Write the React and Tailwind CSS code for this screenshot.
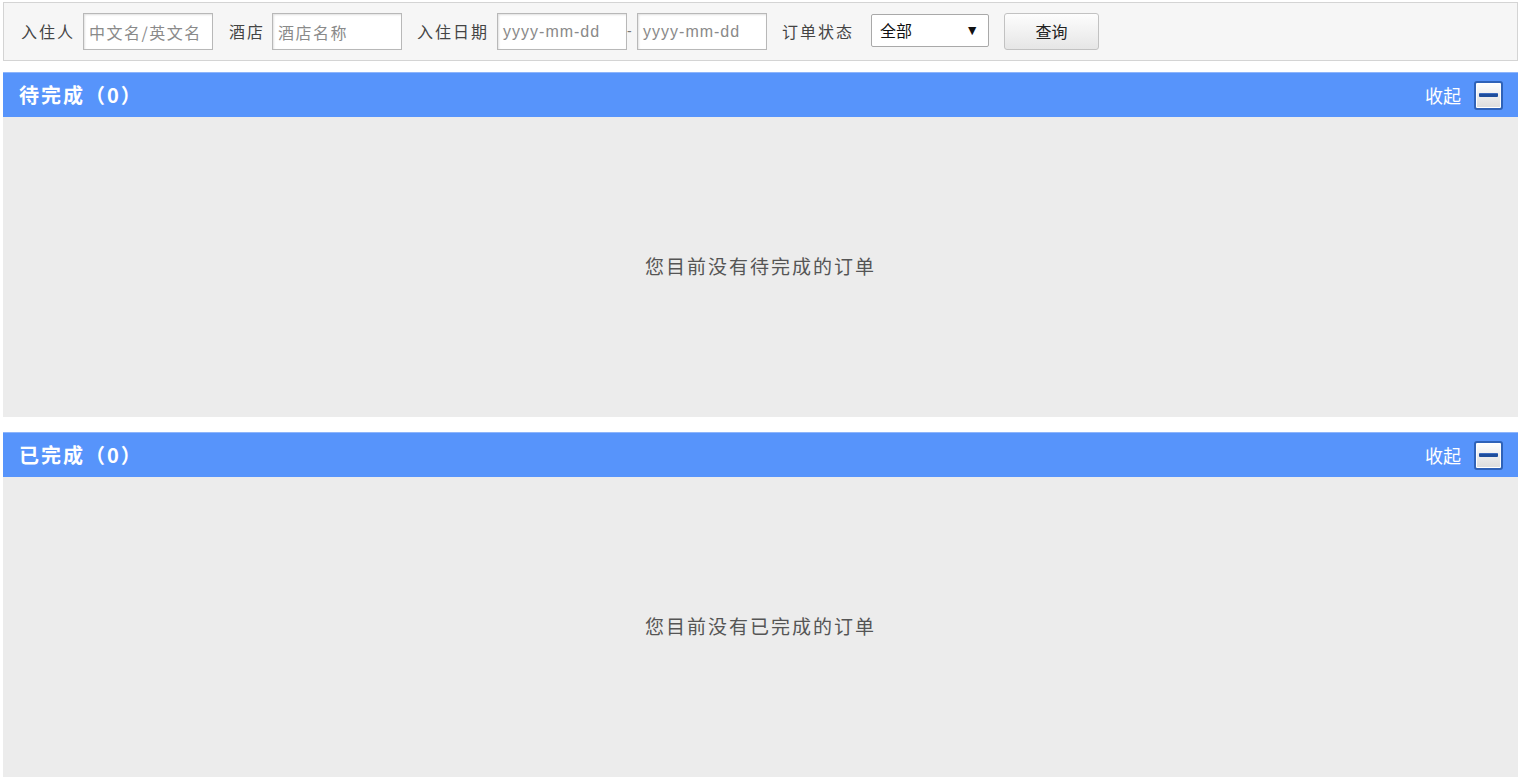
import React from "react";

const cjk = { fontFamily: '"Noto Sans CJK SC", "Liberation Sans", sans-serif' };
const latin = { fontFamily: '"Liberation Sans", "Noto Sans CJK SC", sans-serif' };

function Field({ placeholder, latinText }) {
  return (
    <div
      className={`w-[130px] h-[37px] bg-white border border-[#b8b8b8] shadow-[inset_1px_1px_2px_rgba(0,0,0,0.12)] flex items-center pl-[5px] text-[16px] text-[#8a8a8a] ${latinText ? "tracking-[1px]" : "tracking-[1.5px]"}`}
      style={latinText ? latin : cjk}
    >
      {placeholder}
    </div>
  );
}

function Label({ children, className = "" }) {
  return (
    <span className={`text-[16px] text-[#444] tracking-[2px] whitespace-nowrap -mt-[2px] ${className}`} style={cjk}>
      {children}
    </span>
  );
}

function CollapseIcon() {
  return (
    <div className="w-[29px] h-[29px] rounded-[3px] border-[2px] border-[#2f62b8] bg-gradient-to-b from-white to-[#dcdcdc] flex items-center justify-center shadow-[inset_0_0_0_1px_#ffffff]">
      <div className="w-[19px] h-[4px] bg-[#1e4d9c] rounded-[1px] border-t border-[#3d6cc0]" />
    </div>
  );
}

function Section({ title, empty }) {
  return (
    <div>
      <div className="h-[45px] bg-[#5794fb] border-t border-[#8db5fb] flex items-center justify-between pl-[16px] pr-[15px]">
        <span className="text-white text-[20px] font-bold tracking-[2px]" style={cjk}>
          {title}
        </span>
        <div className="flex items-center">
          <span className="text-white text-[18px] mr-[13px]" style={cjk}>收起</span>
          <CollapseIcon />
        </div>
      </div>
      <div className="h-[300px] bg-[#ececec] flex items-center justify-center">
        <span className="text-[19px] text-[#555] tracking-[2px] mt-[-1px]" style={cjk}>
          {empty}
        </span>
      </div>
    </div>
  );
}

export default function App() {
  return (
    <div className="w-[1520px] h-[783px] bg-white pl-[3px] pr-[2px] pt-[2px]">
      <div className="h-[59px] bg-[#f6f6f6] border border-[#d4d4d4] flex items-center pl-[17px]">
        <Label className="mr-[8px]">入住人</Label>
        <Field placeholder="中文名/英文名" />
        <Label className="ml-[16px] mr-[7px]">酒店</Label>
        <Field placeholder="酒店名称" />
        <Label className="ml-[15px] mr-[8px]">入住日期</Label>
        <Field placeholder="yyyy-mm-dd" latinText />
        <span className="w-[10px] text-[#777] text-[14px] text-left" style={latin}>-</span>
        <Field placeholder="yyyy-mm-dd" latinText />
        <Label className="ml-[15px] mr-[17px]">订单状态</Label>
        <div className="w-[118px] h-[33px] bg-white border border-[#a9a9a9] rounded-[2px] flex items-center justify-between pl-[8px] pr-[9px] -mt-[3px]">
          <span className="text-[16px] text-[#111]" style={cjk}>全部</span>
          <span className="text-[14px] text-[#111]" style={latin}>▼</span>
        </div>
        <div className="ml-[15px] w-[95px] h-[37px] rounded-[3px] border border-[#c2c2c2] bg-gradient-to-b from-[#fdfdfd] to-[#e6e6e6] flex items-center justify-center text-[16px] text-[#222] -mt-[1px]" style={cjk}>
          查询
        </div>
      </div>
      <div className="mt-[11px] flex flex-col gap-[15px]">
        <Section title="待完成（0）" empty="您目前没有待完成的订单" />
        <Section title="已完成（0）" empty="您目前没有已完成的订单" />
      </div>
    </div>
  );
}
